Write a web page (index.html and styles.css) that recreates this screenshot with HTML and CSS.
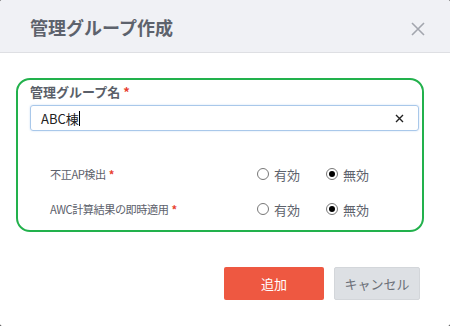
FILE: index.html
```html
<!DOCTYPE html>
<html lang="ja">
<head>
<meta charset="utf-8">
<link rel="stylesheet" href="styles.css">
</head>
<body>
<div class="dialog">
  <div class="header">
    <div class="title">管理グループ作成</div>
    <svg class="close" width="14" height="14" viewBox="0 0 14 14"><path d="M1 1L13 13M13 1L1 13" stroke="#a3a6ae" stroke-width="1.6"/></svg>
  </div>
  <div class="body">
    <div class="frame">
      <div class="label">管理グループ名<span class="req">*</span></div>
      <div class="input"><span class="val">ABC棟</span><span class="caret"></span><svg class="clear" width="9" height="9" viewBox="0 0 9 9"><path d="M1 1L8 8M8 1L1 8" stroke="#222" stroke-width="1.4"/></svg></div>
      <div class="rows">
        <div class="row">
          <div class="rlabel">不正AP検出<span class="req">*</span></div>
          <div class="opts">
            <div class="opt"><span class="radio"></span>有効</div>
            <div class="opt"><span class="radio on"></span>無効</div>
          </div>
        </div>
        <div class="row">
          <div class="rlabel">AWC計算結果の即時適用<span class="req">*</span></div>
          <div class="opts">
            <div class="opt"><span class="radio"></span>有効</div>
            <div class="opt"><span class="radio on"></span>無効</div>
          </div>
        </div>
      </div>
    </div>
  </div>
  <div class="footer">
    <div class="btn primary">追加</div>
    <div class="btn cancel">キャンセル</div>
  </div>
</div>
</body>
</html>
```
FILE: styles.css
```css
html, body { margin: 0; padding: 0; }
body {
  width: 450px; height: 326px; background: #222;
  font-family: "Noto Sans CJK JP", "Noto Sans", sans-serif;
  overflow: hidden;
}
.dialog {
  width: 450px; height: 326px; background: #fff; border-radius: 2px;
  overflow: hidden; display: flex; flex-direction: column;
}
.header {
  height: 53px; background: #f0f1f5; border-bottom: 1px solid #dedfe3;
  display: flex; align-items: center; justify-content: space-between;
  padding: 0 25px 0 30px; box-sizing: border-box; flex: none;
}
.title { font-size: 18px; font-weight: bold; color: #5d626c; margin-top: 1px; }
.close { margin-top: 5px; }
.body { padding: 25px 26px 0 16px; }
.frame {
  border: 2.5px solid #22b14c; border-radius: 14px; height: 154px;
  box-sizing: border-box; padding: 2px 3px 0 12px;
}
.label { font-size: 13px; font-weight: bold; color: #5a5f69; line-height: 20px; }
.req { color: #e8412f; margin-left: 3px; font-weight: bold; }
.input {
  margin-top: 3px; height: 26px; border: 1px solid #a9c8ea; border-radius: 3px;
  box-sizing: border-box; display: flex; align-items: center; padding: 0 14px 0 10px;
  box-shadow: 0 0 2px rgba(120,170,230,0.4);
}
.val { font-size: 13px; color: #222; }
.caret { width: 1px; height: 15px; background: #000; margin-left: 0; }
.clear { margin-left: auto; }
.rows { padding: 34px 0 0 20px; display: flex; flex-direction: column; gap: 17px; }
.row { display: flex; align-items: center; height: 18px; }
.rlabel { font-size: 11.2px; letter-spacing: -0.5px; color: #5d626c; width: 207px; }
.rlabel .req { font-weight: bold; }
.opts { display: flex; gap: 18px; }
.opt { display: flex; align-items: center; font-size: 13px; color: #5d626c; width: 51px; }
.radio {
  width: 12px; height: 12px; border: 1px solid #777; border-radius: 50%;
  margin-right: 5px; position: relative; box-sizing: border-box;
}
.radio.on::after {
  content: ""; position: absolute; left: 2px; top: 2px; width: 6px; height: 6px;
  border-radius: 50%; background: #000;
}
.footer { display: flex; justify-content: flex-end; gap: 10px; padding: 35px 30px 0 0; }
.btn {
  height: 33px; display: flex; align-items: center; justify-content: center;
  font-size: 13px; border-radius: 2px; box-sizing: border-box;
}
.primary { width: 100px; background: #ee5841; color: #fff; }
.cancel { width: 86px; background: #dde0e4; color: #6b6f77; border: 1px solid #d3d6da; }
```
